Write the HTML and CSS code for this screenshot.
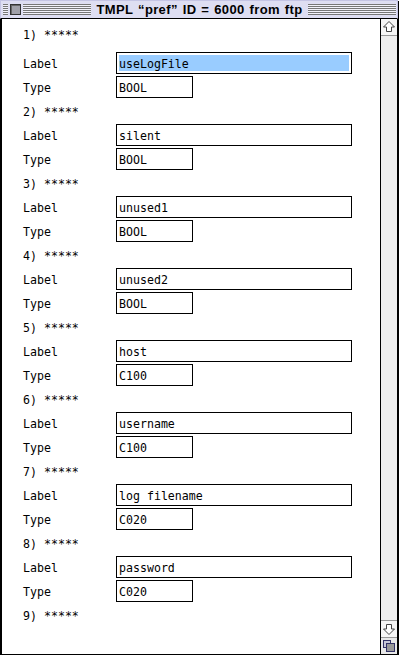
FILE: index.html
```html
<!DOCTYPE html>
<html lang="en">
  <head>
    <meta charset="UTF-8" />
    <title>TMPL “pref” ID = 6000 from ftp</title>
    <link rel="stylesheet" href="styles.css">
  </head>
  <body>
    <div class="window">
      <div class="titlebar">
        <div class="stripes-group">
          <div class="stripes edge"></div>
          <div class="close-box"><span></span></div>
          <div class="stripes"></div>
        </div>
        <div class="title">TMPL “pref” ID = 6000 from ftp</div>
        <div class="stripes-group">
          <div class="stripes"></div>
        </div>
      </div>
      <div class="frame">
        <div class="content">
          <div class="record first">
            <div class="head">1) *****</div>
            <div class="row"><span class="name">Label</span><span class="field wide"><span class="hl">useLogFile</span></span></div>
            <div class="row"><span class="name">Type</span><span class="field short">BOOL</span></div>
          </div>
          <div class="record">
            <div class="head">2) *****</div>
            <div class="row"><span class="name">Label</span><span class="field wide">silent</span></div>
            <div class="row"><span class="name">Type</span><span class="field short">BOOL</span></div>
          </div>
          <div class="record">
            <div class="head">3) *****</div>
            <div class="row"><span class="name">Label</span><span class="field wide">unused1</span></div>
            <div class="row"><span class="name">Type</span><span class="field short">BOOL</span></div>
          </div>
          <div class="record">
            <div class="head">4) *****</div>
            <div class="row"><span class="name">Label</span><span class="field wide">unused2</span></div>
            <div class="row"><span class="name">Type</span><span class="field short">BOOL</span></div>
          </div>
          <div class="record">
            <div class="head">5) *****</div>
            <div class="row"><span class="name">Label</span><span class="field wide">host</span></div>
            <div class="row"><span class="name">Type</span><span class="field short">C100</span></div>
          </div>
          <div class="record">
            <div class="head">6) *****</div>
            <div class="row"><span class="name">Label</span><span class="field wide">username</span></div>
            <div class="row"><span class="name">Type</span><span class="field short">C100</span></div>
          </div>
          <div class="record">
            <div class="head">7) *****</div>
            <div class="row"><span class="name">Label</span><span class="field wide">log filename</span></div>
            <div class="row"><span class="name">Type</span><span class="field short">C020</span></div>
          </div>
          <div class="record">
            <div class="head">8) *****</div>
            <div class="row"><span class="name">Label</span><span class="field wide">password</span></div>
            <div class="row"><span class="name">Type</span><span class="field short">C020</span></div>
          </div>
          <div class="record">
            <div class="head">9) *****</div>
          </div>
        </div>
        <div class="scrollbar">
          <div class="arrow up">
            <svg width="16" height="16" viewBox="0 0 16 16">
              <path d="M8 2.5 L13.5 8 L10.5 8 L10.5 12.5 L5.5 12.5 L5.5 8 L2.5 8 Z" fill="#fff" stroke="#444" stroke-width="1" />
            </svg>
          </div>
          <div class="track"></div>
          <div class="arrow down">
            <svg width="16" height="16" viewBox="0 0 16 16">
              <path d="M8 13.5 L13.5 8 L10.5 8 L10.5 3.5 L5.5 3.5 L5.5 8 L2.5 8 Z" fill="#fff" stroke="#444" stroke-width="1" />
            </svg>
          </div>
          <div class="grow-box">
            <svg width="16" height="16" viewBox="0 0 16 16">
              <rect x="2.5" y="2.5" width="7" height="7" fill="#c8c8d8" stroke="#333366" />
              <rect x="5.5" y="5.5" width="8" height="8" fill="#999999" stroke="#333366" />
            </svg>
          </div>
        </div>
      </div>
    </div>
  </body>
</html>
```

FILE: styles.css
```css
body {
  margin: 0;
  background-color: #fff;
  font-family: "DejaVu Sans Mono", "Liberation Mono", monospace;
  font-size: 11.6px;
  color: #000;
}

.window {
  width: 398px;
  box-shadow: 1px 1px 0 #000;
}

/* title bar */
.titlebar {
  display: flex;
  align-items: center;
  box-sizing: border-box;
  height: 19px;
  padding: 0 1px 0 2px;
  background-color: #dedef2;
  border-top: 1px solid #c4c4e4;
  border-left: 1px solid #c4c4e4;
  border-right: 1px solid #c4c4e4;
  border-bottom: 1px solid #000;
}

.stripes-group {
  flex: 1;
  display: flex;
  align-items: center;
  height: 12px;
}

.stripes {
  flex: 1;
  height: 11px;
  background: repeating-linear-gradient(
    to bottom,
    #777 0,
    #777 1px,
    #f2f2fa 1px,
    #f2f2fa 2px
  );
}

.stripes.edge {
  flex: none;
  width: 5px;
}

.close-box {
  width: 15px;
  height: 12px;
  display: flex;
  justify-content: center;
  align-items: center;
}

.close-box span {
  width: 9px;
  height: 9px;
  border: 1px solid #333;
  background-color: #a0a0a8;
  box-shadow: inset 1px 1px 0 #666;
}

.title {
  padding: 0 6px;
  font-family: "Liberation Sans", Arial, sans-serif;
  font-weight: bold;
  font-size: 13px;
  letter-spacing: 0.35px;
  word-spacing: 1px;
  white-space: nowrap;
}

/* window body */
.frame {
  display: flex;
  height: 635px;
  border-left: 2px solid #000;
  border-right: 1px solid #000;
  border-bottom: 1px solid #000;
}

.content {
  flex: 1;
  padding-left: 21px;
}

.record {
  display: flex;
  flex-direction: column;
}

.head {
  box-sizing: border-box;
  height: 26px;
  padding-top: 2px;
  line-height: 25px;
}

.record.first .head {
  height: 33px;
  padding-top: 4px;
}

.row {
  display: flex;
  align-items: center;
  height: 22px;
}

.row + .row {
  margin-top: 2px;
}

.name {
  width: 93px;
  line-height: 22px;
  padding-top: 2px;
}

.field {
  box-sizing: border-box;
  height: 22px;
  border: 1px solid #000;
  padding: 2px 2px 0;
  line-height: 18px;
}

.field.wide {
  width: 236px;
}

.field.short {
  width: 77px;
}

.hl {
  display: block;
  height: 16px;
  line-height: 18px;
  background-color: #99ccff;
}

/* scroll bar */
.scrollbar {
  width: 16px;
  display: flex;
  flex-direction: column;
  border-left: 1px solid #000;
  background-color: #eeeeee;
}

.arrow,
.grow-box {
  height: 16px;
  display: flex;
  justify-content: center;
  align-items: center;
  background-color: #f6f6f6;
}

.arrow.up {
  border-bottom: 1px solid #999;
}

.arrow.down {
  border-top: 1px solid #999;
}

.grow-box {
  border-top: 1px solid #999;
  background-color: #e8e8e8;
}

.track {
  flex: 1;
}
```
